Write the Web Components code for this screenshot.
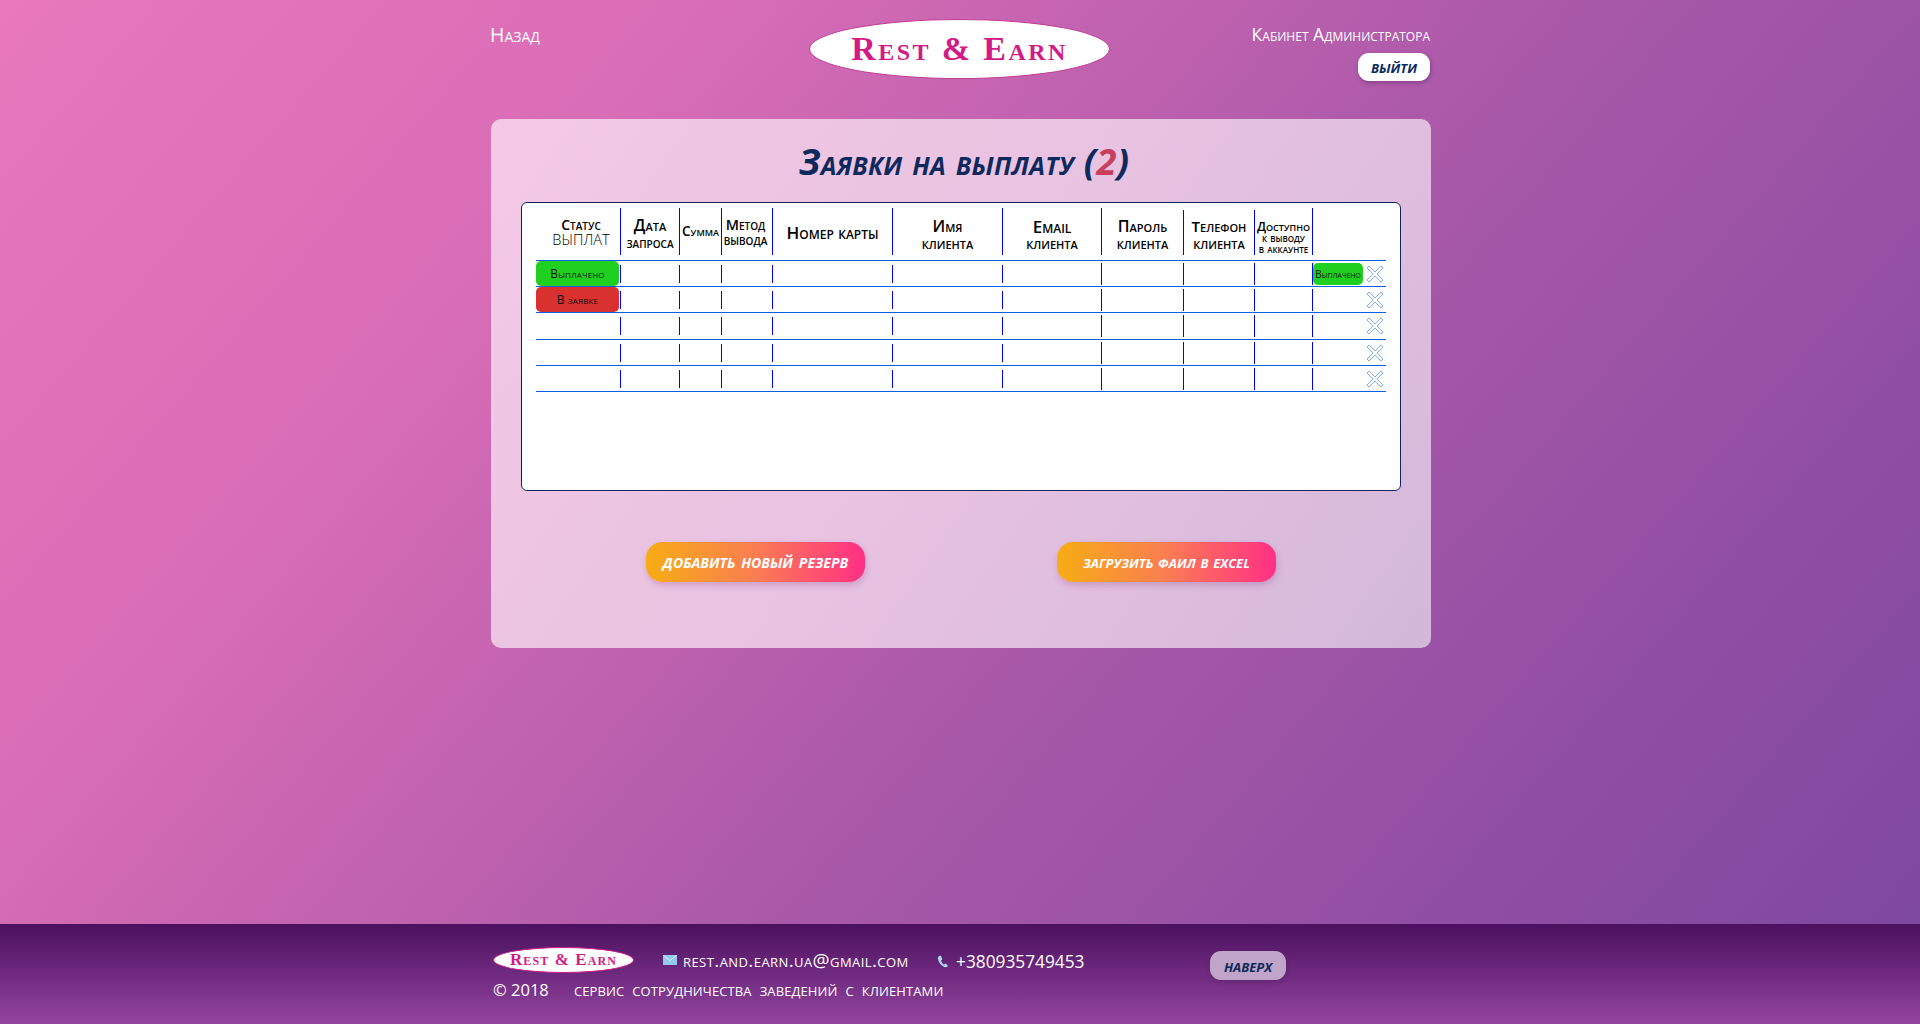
<!DOCTYPE html>
<html lang="ru">
<head>
<meta charset="utf-8">
<title>Заявки на выплату</title>
<style>
  html, body { margin: 0; height: 100%; }
  body {
    min-height: 1024px;
    display: flex;
    flex-direction: column;
    overflow: hidden;
    font-family: "Open Sans", "Liberation Sans", sans-serif;
    font-variant: small-caps;
    background: linear-gradient(131deg, #e978bc 0%, #d86cb6 26%, #a858a8 57%, #7b46a0 100%);
  }
</style>
</head>
<body>
<admin-page>
  <site-header slot="header"></site-header>
  <payout-card>
    <payout-table></payout-table>
    <action-button slot="actions" style="font-size: 19.3px; word-spacing: 1px">добавить новый резерв</action-button>
    <action-button slot="actions" style="font-size: 18.2px">загрузить фаил в excel</action-button>
  </payout-card>
</admin-page>
<site-footer></site-footer>

<script>
class RestLogo extends HTMLElement {
  constructor() {
    super();
    this.attachShadow({ mode: 'open' });
    this.shadowRoot.innerHTML = `
      <style>
        :host {
          display: flex;
          align-items: center;
          justify-content: center;
          box-sizing: border-box;
          width: 301px;
          height: 60px;
          margin-left: -1px;
          border-radius: 50%;
          background: #fff;
          border: 1px solid #c23c94;
          color: #d21b86;
          font-family: "Liberation Serif", serif;
          font-variant: small-caps;
          font-size: 34px;
          font-weight: 700;
          letter-spacing: 2.4px;
          line-height: 1;
          white-space: nowrap;
        }
        :host([small]) {
          width: 141px;
          height: 26px;
          margin-left: 0;
          border: 1px solid #d21b86;
          font-size: 17px;
          letter-spacing: 1.1px;
        }
      </style>
      <span>Rest &amp; Earn</span>
    `;
  }
}

class ActionButton extends HTMLElement {
  constructor() {
    super();
    this.attachShadow({ mode: 'open' });
    this.shadowRoot.innerHTML = `
      <style>
        :host {
          display: flex;
          align-items: center;
          justify-content: center;
          box-sizing: border-box;
          width: 219px;
          height: 40px;
          padding-bottom: 3px;
          border-radius: 16px;
          background: linear-gradient(90deg, #f6ad14 0%, #fb7d52 50%, #ff2f86 100%);
          box-shadow: 1px 3px 6px rgba(150, 70, 130, .3);
          color: #fff;
          font-weight: 700;
          font-style: italic;
          white-space: nowrap;
        }
      </style>
      <slot></slot>
    `;
  }
}

class PillButton extends HTMLElement {
  constructor() {
    super();
    this.attachShadow({ mode: 'open' });
    this.shadowRoot.innerHTML = `
      <style>
        :host {
          display: flex;
          align-items: center;
          justify-content: center;
          box-sizing: border-box;
          height: 28px;
          padding-bottom: 2px;
          border-radius: 11px;
          background: #fff;
          box-shadow: 1px 2px 4px rgba(70, 30, 90, .4);
          color: #0e2a5c;
          font-size: 18px;
          font-weight: 700;
          font-style: italic;
        }
      </style>
      <slot></slot>
    `;
  }
}

class SiteHeader extends HTMLElement {
  constructor() {
    super();
    this.attachShadow({ mode: 'open' });
    this.shadowRoot.innerHTML = `
      <style>
        :host {
          display: grid;
          grid-template-columns: 1fr 300px 1fr;
          column-gap: 20px;
          height: 119px;
          box-sizing: border-box;
          padding-top: 19px;
          color: #fff;
        }
        .back { font-size: 19.5px; line-height: 28px; margin-top: 2px; }
        .side {
          display: flex;
          flex-direction: column;
          align-items: flex-end;
          gap: 5px;
        }
        .who { font-size: 17.6px; line-height: 27px; margin-top: 2px; white-space: nowrap; }
        pill-button { width: 72px; }
      </style>
      <div class="back">Назад</div>
      <rest-logo></rest-logo>
      <div class="side">
        <div class="who">Кабинет Администратора</div>
        <pill-button>выйти</pill-button>
      </div>
    `;
  }
}

class PayoutCard extends HTMLElement {
  constructor() {
    super();
    this.attachShadow({ mode: 'open' });
    this.shadowRoot.innerHTML = `
      <style>
        :host {
          display: block;
          box-sizing: border-box;
          width: 940px;
          height: 529px;
          margin-left: 1px;
          padding: 19px 30px 0;
          border-radius: 10px;
          background: linear-gradient(125deg, #f3c9e6 0%, #e8c2e1 50%, #d3b8da 100%);
        }
        h1 {
          margin: 0 0 18px;
          height: 46px;
          padding-left: 6px;
          line-height: 46px;
          text-align: center;
          color: #0e2a5c;
          font-size: 36.3px;
          letter-spacing: .3px;
          font-weight: 700;
          font-style: italic;
        }
        h1 span { color: #c73f5c; }
        .actions {
          display: flex;
          justify-content: space-between;
          padding: 51px 125px 0;
        }
      </style>
      <h1>Заявки на выплату (<span>2</span>)</h1>
      <slot></slot>
      <div class="actions"><slot name="actions"></slot></div>
    `;
  }
}

// ширины колонок: статус, дата, сумма, метод, карта, имя, email, пароль, телефон, доступно, кнопка
const COLUMNS = '84px 59px 42px 51px 120px 110px 99px 82px 71px 58px 74px';

// текст шапки одной строкой с переносом, первая строка крупнее через ::first-line
const HEAD_CELLS = [
  { cls: 'status', pad: 0, text: 'Статус\nВЫПЛАТ' },
  { cls: 'two f16', pad: 4, text: 'Дата\nзапроса', size: 14.5 },
  { cls: 'one', pad: 0, text: 'Сумма', size: 13.5 },
  { cls: 'tight', pad: 0, text: 'Метод\nвывода' },
  { cls: 'one', pad: 2, text: 'Номер карты', size: 17 },
  { cls: 'two f16', pad: 7, text: 'Имя\nклиента' },
  { cls: 'two f17', pad: 7, text: 'Email\nклиента' },
  { cls: 'two f16', pad: 7, text: 'Пароль\nклиента' },
  { cls: 'two f15 low', pad: 5, text: 'Телефон\nклиента' },
  { cls: 'three low', pad: 10, text: 'Доступно\nк выводу\nв аккаунте' },
  { cls: '', pad: 0, text: '' }
];

class PayoutTable extends HTMLElement {
  constructor() {
    super();
    this.attachShadow({ mode: 'open' });
    const rows = [
      { status: 'ok', action: true },
      { status: 'wait' },
      {},
      {},
      {}
    ];
    const cross = `
      <svg class="del" width="18" height="18" viewBox="0 0 18 18">
        <path d="M1 3 3 1 9 7 15 1 17 3 11 9 17 15 15 17 9 11 3 17 1 15 7 9Z" fill="#fff" stroke="#7fb0ea" stroke-width="1"/>
      </svg>`;
    const head = HEAD_CELLS.map((c, i) => {
      const size = c.size ? `font-size:${c.size}px;` : '';
      return `<div class="hc ${i ? 'sep' : ''} ${c.cls}" style="padding-top:${c.pad}px"><b style="${size}">${c.text}</b></div>`;
    }).join('');
    const body = rows.map(r => {
      let cells = '';
      for (let i = 0; i < 11; i++) {
        let inner = '';
        if (i === 0 && r.status === 'ok') inner = '<div class="pill green">Выплачено</div>';
        if (i === 0 && r.status === 'wait') inner = '<div class="pill red">В заявке</div>';
        if (i === 10) inner = (r.action ? '<div class="pill green mini">Выплачено</div>' : '<i class="gap"></i>') + cross;
        const cls = i === 0 ? 'first' : (i > 6 ? 'sep tall' : 'sep');
        cells += `<div class="c ${cls}">${inner}</div>`;
      }
      return `<div class="row">${cells}</div>`;
    }).join('');
    this.shadowRoot.innerHTML = `
      <style>
        :host {
          display: block;
          box-sizing: border-box;
          height: 289px;
          padding: 5px 14px 0;
          background: #fff;
          border: 1px solid #12235c;
          border-radius: 6px;
          color: #000;
        }
        .head, .row {
          display: grid;
          grid-template-columns: ${COLUMNS};
          width: 850px;
        }
        .head {
          height: 47px;
          padding-bottom: 5px;
          border-bottom: 1px solid #0b5fe2;
        }
        .hc {
          display: flex;
          flex-direction: column;
          align-items: center;
          justify-content: center;
          min-width: 0;
          white-space: nowrap;
          box-sizing: border-box;
          text-align: center;
        }
        .hc b { display: block; font-weight: 600; white-space: pre-line; line-height: 17px; }
        .hc.sep { border-left: 1px solid #0000ff; }
        .hc.low { margin-top: 2px; }
        .two b { font-size: 15.4px; }
        .f15 b::first-line { font-size: 15px; }
        .f16 b::first-line { font-size: 16px; }
        .f17 b::first-line { font-size: 17px; }
        .status { padding-left: 6px; }
        .status b {
          font-size: 14.5px;
          line-height: 15px;
          font-weight: 300;
        }
        .status b::first-line {
          font-size: 14px;
          font-weight: 600;
        }
        .tight { padding-right: 3px; }
        .tight b { font-size: 14.4px; line-height: 15px; }
        .three b { font-size: 12px; line-height: 11px; }
        .three b::first-line { font-size: 12.5px; }
        .row {
          height: 26px;
          box-sizing: border-box;
          border-bottom: 1px solid #0b5fe2;
        }
        .row:nth-of-type(4) { height: 27px; }
        .c {
          display: flex;
          align-items: center;
          min-width: 0;
        }
        .c.sep::before {
          content: "";
          flex: none;
          width: 1px;
          height: 18px;
          background: #0000ff;
        }
        .c.tall::before { height: 22px; }
        .pill {
          display: flex;
          align-items: center;
          justify-content: center;
          height: 25px;
          width: 83px;
          border-radius: 5px;
          font-size: 12px;
          letter-spacing: .15px;
          color: #111;
          white-space: nowrap;
        }
        .green { background: #20d020; }
        .red { background: #d93030; }
        .pill.mini {
          width: 50px;
          height: 22px;
          font-size: 10px;
          letter-spacing: -.1px;
        }
        .gap { width: 50px; flex: none; }
        .del { flex: none; margin-left: 3px; }
      </style>
      <div class="head">${head}</div>
      ${body}
    `;
  }
}

class AdminPage extends HTMLElement {
  constructor() {
    super();
    this.attachShadow({ mode: 'open' });
    this.shadowRoot.innerHTML = `
      <style>
        :host {
          display: block;
          flex: 1;
          box-sizing: border-box;
          width: 940px;
          margin: 0 auto;
        }
      </style>
      <slot name="header"></slot>
      <slot></slot>
    `;
  }
}

class SiteFooter extends HTMLElement {
  constructor() {
    super();
    this.attachShadow({ mode: 'open' });
    this.shadowRoot.innerHTML = `
      <style>
        :host {
          display: block;
          flex: none;
          height: 100px;
          color: #fff;
          background: linear-gradient(180deg, #4b105f 0%, #93459f 100%);
        }
        .inner {
          width: 940px;
          margin: 0 auto;
          box-sizing: border-box;
          padding: 22px 0 0 3px;
          display: grid;
          grid-template-columns: 170px 274px 273px auto;
          grid-template-rows: 27px 30px;
          justify-content: start;
          align-items: center;
        }
        .mail, .phone { display: flex; align-items: center; white-space: nowrap; }
        .mail { font-size: 19px; letter-spacing: .42px; gap: 6px; margin-top: 1px; }
        .phone { font-size: 17.3px; gap: 7px; margin-top: 4px; }
        .copy { font-size: 16.5px; margin-top: 3px; }
        .about { font-size: 19px; letter-spacing: .1px; word-spacing: 3px; grid-column: 2 / 4; margin-top: 2px; margin-left: -89px; white-space: nowrap; }
        pill-button {
          width: 76px;
          height: 29px;
          background: #c0a4c9;
          margin-top: 12px;
        }
      </style>
      <div class="inner">
        <rest-logo small></rest-logo>
        <div class="mail">
          <svg width="14" height="10" viewBox="0 0 14 10"><rect width="14" height="10" fill="#93c9ef"/><path d="M0 0 7 5.5 14 0" fill="none" stroke="#d4ecfa" stroke-width="1"/></svg>
          <span>rest.and.earn.ua@gmail.com</span>
        </div>
        <div class="phone">
          <svg width="12" height="13" viewBox="0 0 12 13"><path d="M2.6.8C1.4 1.4.7 2.5 1 4.1c.6 3.5 3 6.5 6.3 8 1.3.5 2.6.2 3.4-.9.3-.4.2-.8-.1-1L8.7 8.800c-.4-.2-.8-.1-1 .2l-.6.7C5.600 8.900 4.300 7.100 3.900 5.300l.9-.4c.3-.2.4-.5.4-.8L4.100 1c-.2-.4-.9-.5-1.500-.2Z" fill="#a8dcf6"/></svg>
          <span>+380935749453</span>
        </div>
        <pill-button>наверх</pill-button>
        <div class="copy">© 2018</div>
        <div class="about">сервис сотрудничества заведений с клиентами</div>
      </div>
    `;
  }
}

customElements.define('rest-logo', RestLogo);
customElements.define('action-button', ActionButton);
customElements.define('pill-button', PillButton);
customElements.define('site-header', SiteHeader);
customElements.define('payout-card', PayoutCard);
customElements.define('payout-table', PayoutTable);
customElements.define('admin-page', AdminPage);
customElements.define('site-footer', SiteFooter);
</script>
</body>
</html>
